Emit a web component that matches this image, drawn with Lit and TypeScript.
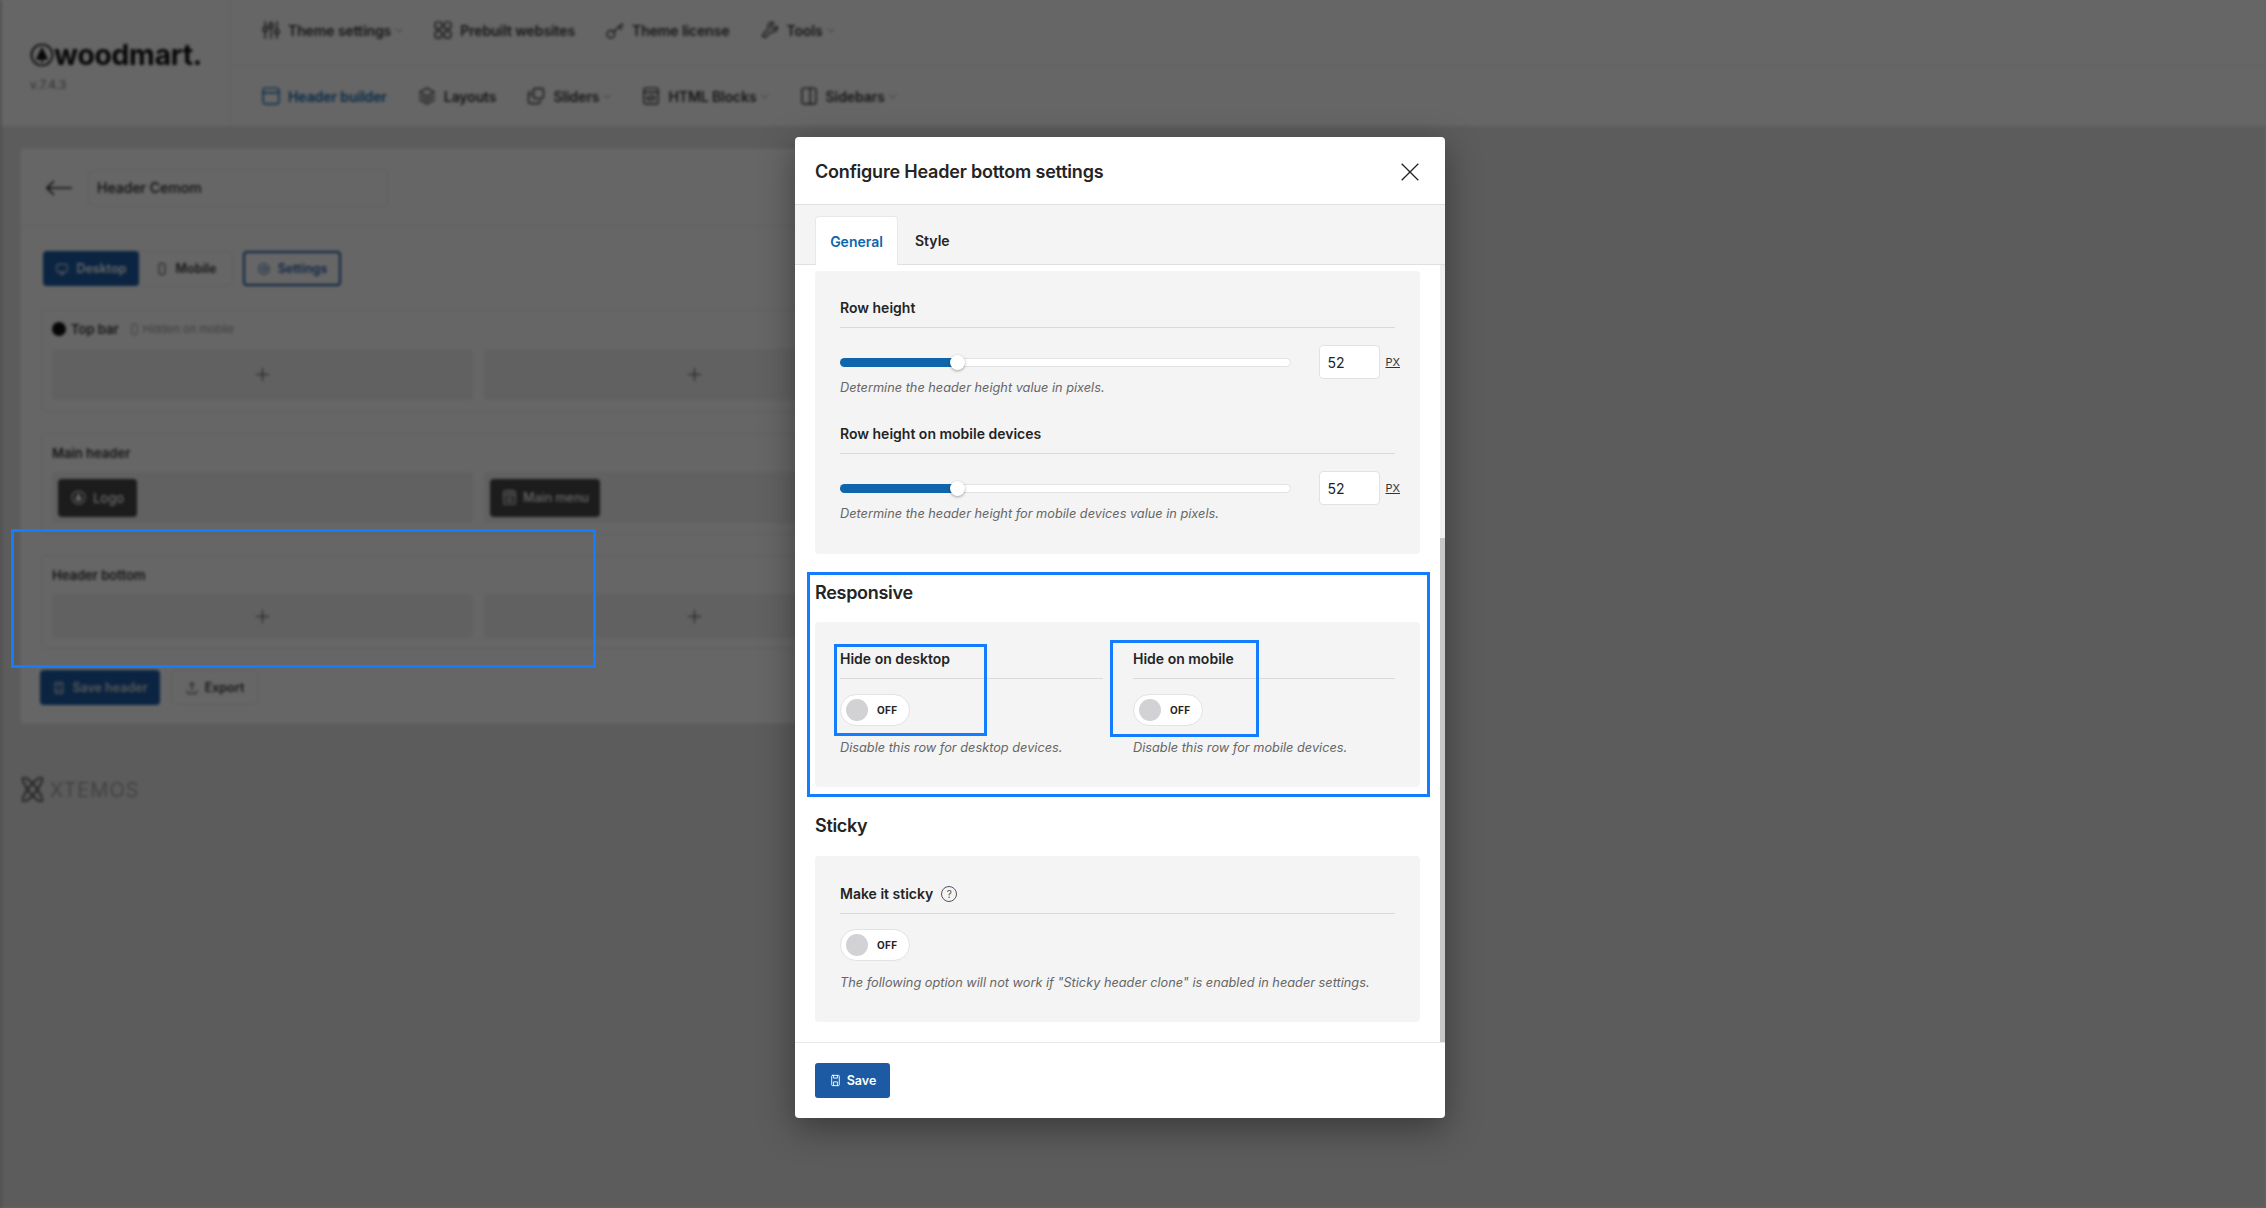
import {LitElement, html, css, svg} from 'lit';
import {customElement} from 'lit/decorators.js';

const icon = (body: unknown, size = 20) => html`<svg
  width=${size}
  height=${size}
  viewBox="0 0 24 24"
  fill="none"
  stroke="currentColor"
  stroke-width="1.7"
  stroke-linecap="round"
  stroke-linejoin="round"
>${body}</svg>`;

const ICONS = {
  sliders: svg`<path d="M5 2v6M5 14v8M12 2v2M12 10v12M19 2v9M19 17v5"/><circle cx="5" cy="11" r="2.6"/><circle cx="12" cy="7" r="2.6"/><circle cx="19" cy="14" r="2.6"/>`,
  grid: svg`<rect x="2.500" y="2.500" width="8" height="8" rx="2.600"/><rect x="13.500" y="2.500" width="8" height="8" rx="2.600"/><rect x="2.500" y="13.500" width="8" height="8" rx="2.600"/><rect x="13.500" y="13.500" width="8" height="8" rx="2.600"/>`,
  key: svg`<circle cx="7" cy="17" r="4.500"/><path d="M10.500 14 20 5M17 8l3 3M20 5l1.500 1.500"/>`,
  wrench: svg`<path d="M15 2.500a5.500 5.500 0 0 0-5 7.600L3.600 17.600a2.200 2.200 0 0 0 3 3l6.300-6.600a5.500 5.500 0 0 0 7.500-6.600l-3.300 3.200-3-.6-.6-3 3.200-3.200a5.500 5.500 0 0 0-1.700-.3Z"/>`,
  window: svg`<rect x="2.500" y="2.500" width="19" height="19" rx="2.500"/><path d="M2.500 8h19"/>`,
  layers: svg`<path d="m12 2.500 9 5-9 5-9-5 9-5Z"/><path d="m3 12 9 5 9-5M3 16.500l9 5 9-5"/>`,
  slides: svg`<rect x="9" y="3" width="12" height="12" rx="2"/><path d="M6 7H5a2 2 0 0 0-2 2v10a2 2 0 0 0 2 2h10a2 2 0 0 0 2-2v-1"/><path d="M6 11v-1"/>`,
  code: svg`<rect x="3.500" y="2.500" width="17" height="19" rx="2"/><path d="M3.500 7.500h17M9.500 12l-2.500 2.500L9.500 17M14.500 12l2.500 2.500-2.500 2.500M12.800 11.500l-1.600 6"/>`,
  sidebar: svg`<rect x="3.500" y="2.500" width="17" height="19" rx="2.500"/><path d="M13.500 2.500v19"/>`,
  monitor: svg`<rect x="3" y="4" width="18" height="13" rx="2"/><path d="M12 17v4M8.500 21h7"/>`,
  phone: svg`<rect x="7" y="2.500" width="10" height="19" rx="2"/>`,
  gear: svg`<path d="m12 2.500 8.200 4.750v9.500L12 21.500l-8.200-4.750v-9.500Z"/><circle cx="12" cy="12" r="3.500"/>`,
  save: svg`<rect x="5" y="2.500" width="14" height="19" rx="1.500"/><path d="M8.500 2.500v5h7v-5M8.500 21.500v-7h7v7"/>`,
  upload: svg`<path d="M12 16V3M7.500 7.500 12 3l4.500 4.500M3.500 17v2.500a2 2 0 0 0 2 2h13a2 2 0 0 0 2-2V17"/>`,
  logoMark: svg`<circle cx="12" cy="12" r="10.500"/><path d="M12 5.500 17 16H7Z" fill="currentColor"/><path d="M12 16v3"/>`,
  menu: svg`<rect x="4" y="2.500" width="16" height="19" rx="1.500"/><path d="M4 8.500h16M10 2.500v6M15 2.500v6"/><circle cx="12" cy="15" r="3"/>`,
};

type NavItem = {label: string; icon: keyof typeof ICONS; caret?: boolean; active?: boolean};

const NAV_TOP: NavItem[] = [
  {label: 'Theme settings', icon: 'sliders', caret: true},
  {label: 'Prebuilt websites', icon: 'grid'},
  {label: 'Theme license', icon: 'key'},
  {label: 'Tools', icon: 'wrench', caret: true},
];

const NAV_BOTTOM: NavItem[] = [
  {label: 'Header builder', icon: 'window', active: true},
  {label: 'Layouts', icon: 'layers'},
  {label: 'Sliders', icon: 'slides', caret: true},
  {label: 'HTML Blocks', icon: 'code', caret: true},
  {label: 'Sidebars', icon: 'sidebar', caret: true},
];

const caret = html`<svg class="caret" width="8" height="5" viewBox="0 0 8 5" fill="none" stroke="currentColor"><path d="m.5.5 3.500 3.500L7.500.5"/></svg>`;

@customElement('builder-page')
export class BuilderPage extends LitElement {
  static styles = css`
    :host {
      display: block;
      height: 1208px;
      box-sizing: border-box;
      background: #e6e6e6;
      border-left: 1px solid #777;
      color: #1e1e1e;
      filter: blur(1.4px);
      font-family: Inter, 'Liberation Sans', sans-serif;
      overflow: hidden;
    }
    .top {
      display: flex;
      height: 126px;
      background: #fff;
    }
    .brand {
      width: 229px;
      flex: none;
      box-sizing: border-box;
      padding: 41px 0 0 29px;
      border-right: 1px solid #f0f0f0;
    }
    .logo {
      display: flex;
      align-items: center;
      height: 28px;
      font-size: 28.200px;
      font-weight: 700;
      letter-spacing: -0.2px;
      color: #111;
    }
    .version {
      margin-top: 8px;
      font-size: 12px;
      color: #777;
    }
    .navs {
      flex: 1;
    }
    .nav {
      display: flex;
      align-items: center;
      padding-left: 31px;
      gap: 30px;
      font-size: 14px;
      letter-spacing: -0.1px;
      font-weight: 600;
      color: #333;
    }
    .nav.first {
      height: 66px;
      box-sizing: border-box;
      padding-bottom: 5px;
      border-bottom: 1px solid #f0f0f0;
    }
    .nav.second {
      height: 60px;
    }
    .nav-item {
      display: flex;
      align-items: center;
      gap: 7px;
    }
    .nav-item.active {
      color: #0f65ab;
    }
    .caret {
      color: #999;
      margin-left: -3px;
    }
    .card {
      margin: 22px 0 0 19px;
      width: 1360px;
      height: 576px;
      box-sizing: border-box;
      background: #fff;
      border: 1px solid #efefef;
      border-radius: 4px;
    }
    .name-row {
      display: flex;
      align-items: center;
      gap: 16px;
      height: 78px;
      box-sizing: border-box;
      padding-left: 25px;
      border-bottom: 1px solid #efefef;
    }
    .name-input {
      width: 300px;
      height: 36px;
      box-sizing: border-box;
      display: flex;
      align-items: center;
      padding-left: 8px;
      border: 1px solid #e8e8e8;
      border-radius: 4px;
      font-size: 14px;
      font-weight: 500;
    }
    .inner {
      padding: 24px 0 0 20px;
    }
    .tabs {
      display: flex;
      gap: 10px;
      margin-left: 2px;
    }
    .segment {
      display: flex;
      height: 35px;
      border: 1px solid #efefef;
      border-radius: 4px;
      width: 190px;
      box-sizing: border-box;
    }
    .seg {
      display: flex;
      align-items: center;
      justify-content: center;
      gap: 7px;
      font-size: 12.500px;
      font-weight: 600;
      color: #333;
    }
    .seg.desktop {
      width: 96px;
      margin: -1px 0 -1px -1px;
      background: #1c5ba3;
      color: #fff;
      border-radius: 4px;
    }
    .seg.mobile {
      flex: 1;
    }
    .seg.settings {
      width: 98px;
      height: 35px;
      box-sizing: border-box;
      border: 2px solid #1c5ba3;
      border-radius: 4px;
      color: #1c5ba3;
    }
    .box {
      box-sizing: border-box;
      margin-top: 21px;
      padding: 9px 10px 10px 10px;
      border: 1px solid #efefef;
      border-radius: 4px;
      width: 1310px;
    }
    .box.first {
      margin-top: 23px;
      height: 103px;
    }
    .box-title {
      display: flex;
      align-items: center;
      gap: 5px;
      height: 20px;
      font-size: 13px;
      font-weight: 600;
      color: #333;
    }
    .dot {
      width: 14px;
      height: 14px;
      border-radius: 50%;
      background: #111;
    }
    .hidden-note {
      display: flex;
      align-items: center;
      gap: 2px;
      margin-left: 4px;
      font-size: 11px;
      font-weight: 400;
      color: #999;
    }
    .cells {
      display: grid;
      grid-template-columns: repeat(3, 421px);
      gap: 11px;
      margin-top: 9px;
    }
    .first .cells {
      margin-top: 10px;
    }
    .cell {
      display: flex;
      align-items: center;
      justify-content: center;
      height: 51px;
      background: #f2f2f2;
      border-radius: 4px;
      color: #444;
    }
    .short .cell {
      height: 44px;
    }
    .cell.left {
      justify-content: flex-start;
      padding-left: 6px;
      box-sizing: border-box;
    }
    .chip {
      display: flex;
      align-items: center;
      gap: 7px;
      height: 38px;
      padding: 0 13px;
      background: #46464a;
      border-radius: 4px;
      color: #fff;
      font-size: 13px;
      font-weight: 500;
    }
    .chip.menu {
      gap: 5px;
      padding: 0 11px;
      font-size: 12.500px;
    }
    .actions {
      display: flex;
      gap: 11px;
      margin: 21px 0 0 -1px;
    }
    .btn {
      display: flex;
      align-items: center;
      justify-content: center;
      gap: 6px;
      height: 35px;
      border-radius: 4px;
      font-size: 12.500px;
      font-weight: 600;
    }
    .btn.save {
      width: 120px;
      background: #1c5ba3;
      color: #ddd;
    }
    .btn.export {
      width: 87px;
      box-sizing: border-box;
      border: 1px solid #efefef;
      color: #333;
    }
    .credits {
      display: flex;
      align-items: center;
      gap: 5px;
      margin: 53px 0 0 19px;
      padding-bottom: 13px;
      border-bottom: 1px solid #e2e2e2;
      width: 1360px;
      color: #8f8f8f;
      font-size: 20px;
      font-weight: 300;
      letter-spacing: 1.1px;
    }
    .credits svg {
      color: #666;
    }
  `;

  private navItem(item: NavItem) {
    return html`<div class="nav-item ${item.active ? 'active' : ''}">
      ${icon(ICONS[item.icon])}<span>${item.label}</span>${item.caret ? caret : ''}
    </div>`;
  }

  private plus() {
    return html`<svg width="13" height="13" viewBox="0 0 13 13" stroke="#444" stroke-width="1"><path d="M6.500 0v13M0 6.500h13"/></svg>`;
  }

  render() {
    return html`
      <div class="top">
        <div class="brand">
          <div class="logo">${icon(ICONS.logoMark, 24)}<span>woodmart.</span></div>
          <div class="version">v.7.4.3</div>
        </div>
        <div class="navs">
          <div class="nav first">${NAV_TOP.map((i) => this.navItem(i))}</div>
          <div class="nav second">${NAV_BOTTOM.map((i) => this.navItem(i))}</div>
        </div>
      </div>
      <div class="card">
        <div class="name-row">
          <svg width="26" height="16" viewBox="0 0 26 16" fill="none" stroke="#222" stroke-width="1.600"><path d="M26 8H1M8 1 1 8l7 7"/></svg>
          <div class="name-input">Header Cemom</div>
        </div>
        <div class="inner">
          <div class="tabs">
            <div class="segment">
              <div class="seg desktop">${icon(ICONS.monitor, 14)}Desktop</div>
              <div class="seg mobile">${icon(ICONS.phone, 14)}Mobile</div>
            </div>
            <div class="seg settings">${icon(ICONS.gear, 14)}Settings</div>
          </div>
          <div class="box first">
            <div class="box-title">
              <span class="dot"></span>Top bar
              <span class="hidden-note">${icon(ICONS.phone, 13)}Hidden on mobile</span>
            </div>
            <div class="cells"><div class="cell">${this.plus()}</div><div class="cell">${this.plus()}</div><div class="cell">${this.plus()}</div></div>
          </div>
          <div class="box">
            <div class="box-title">Main header</div>
            <div class="cells">
              <div class="cell left"><div class="chip">${icon(ICONS.logoMark, 15)}Logo</div></div>
              <div class="cell left"><div class="chip menu">${icon(ICONS.menu, 17)}Main menu</div></div>
              <div class="cell"></div>
            </div>
          </div>
          <div class="box short">
            <div class="box-title">Header bottom</div>
            <div class="cells"><div class="cell">${this.plus()}</div><div class="cell">${this.plus()}</div><div class="cell">${this.plus()}</div></div>
          </div>
          <div class="actions">
            <div class="btn save">${icon(ICONS.save, 14)}Save header</div>
            <div class="btn export">${icon(ICONS.upload, 14)}Export</div>
          </div>
        </div>
      </div>
      <div class="credits">
        <svg width="25" height="25" viewBox="0 0 25 25" fill="none" stroke="currentColor" stroke-width="2.200"><ellipse cx="12.500" cy="12.500" rx="4" ry="15" transform="rotate(38 12.500 12.500)"/><ellipse cx="12.500" cy="12.500" rx="4" ry="15" transform="rotate(-38 12.500 12.500)"/></svg>
        <span>XTEMOS</span>
      </div>
    `;
  }
}

@customElement('settings-modal')
export class SettingsModal extends LitElement {
  static styles = css`
    :host {
      position: absolute;
      left: 795px;
      top: 137px;
      width: 650px;
      height: 981px;
      display: flex;
      flex-direction: column;
      background: #fff;
      border-radius: 4px;
      box-shadow: 0 10px 35px rgba(0, 0, 0, 0.38);
      font-family: Inter, 'Liberation Sans', sans-serif;
      color: #242424;
      overflow: hidden;
    }
    .head {
      display: flex;
      align-items: center;
      justify-content: space-between;
      height: 68px;
      flex: none;
      box-sizing: border-box;
      padding: 2px 26px 0 20px;
      border-bottom: 1px solid #e0e0e0;
      font-size: 18px;
      font-weight: 600;
      letter-spacing: -0.2px;
    }
    .tabs {
      display: flex;
      flex: none;
      height: 60px;
      box-sizing: border-box;
      padding: 11px 0 0 20px;
      background: #f4f4f4;
      border-bottom: 1px solid #e0e0e0;
      font-size: 14px;
      font-weight: 600;
    }
    .tab {
      display: flex;
      align-items: center;
      height: 49px;
      box-sizing: border-box;
    }
    .tab.active {
      width: 83px;
      background: #fff;
      border: 1px solid #e8e8e8;
      border-bottom: none;
      border-radius: 4px 4px 0 0;
      color: #0f65ab;
      justify-content: center;
    }
    .tab:not(.active) {
      padding: 0 17px;
    }
    .body {
      position: relative;
      flex: 1;
      min-height: 0;
      box-sizing: border-box;
      padding: 6px 25px 0 20px;
      overflow: hidden;
    }
    .track-y {
      position: absolute;
      top: 0;
      right: 0;
      bottom: 0;
      width: 5px;
      background: #f0f0f0;
    }
    .thumb-y {
      position: absolute;
      top: 273px;
      left: 0;
      right: 0;
      height: 504px;
      background: #c6c6c6;
    }
    .panel {
      background: #f4f4f4;
      border-radius: 4px;
      padding: 27px 25px 31px 25px;
    }
    .panel.responsive {
      padding-bottom: 30px;
    }
    .panel.sticky {
      padding: 28px 25px 30px 25px;
    }
    h3 {
      margin: 27px 0 17px;
      height: 24px;
      font-size: 18px;
      line-height: 24px;
      font-weight: 600;
      letter-spacing: -0.3px;
    }
    h3.sticky {
      margin-bottom: 18px;
    }
    .label {
      display: flex;
      align-items: center;
      gap: 8px;
      height: 20px;
      padding-bottom: 9px;
      border-bottom: 1px solid #dadada;
      font-size: 14px;
      line-height: 20px;
      font-weight: 600;
    }
    .label.next {
      margin-top: 27px;
    }
    .slider {
      display: flex;
      align-items: center;
      margin-top: 17px;
      width: 560px;
    }
    .rail {
      position: relative;
      width: 451px;
      height: 9px;
      box-sizing: border-box;
      background: #fff;
      border: 1px solid #e2e2e2;
      border-radius: 5px;
    }
    .fill {
      height: 100%;
      margin: -1px 0 0 -1px;
      padding: 1px 0 1px 1px;
      background: #0f65ab;
      border-radius: 5px 0 0 5px;
    }
    .knob {
      position: absolute;
      top: -4px;
      margin-left: -8px;
      width: 15px;
      height: 15px;
      background: #fff;
      border-radius: 50%;
      box-shadow: 0 1px 3px rgba(0, 0, 0, 0.35);
    }
    .num {
      margin-left: 28px;
      width: 62px;
      height: 34px;
      box-sizing: border-box;
      display: flex;
      align-items: center;
      padding-left: 8px;
      background: #fff;
      border: 1px solid #e2e2e2;
      border-radius: 4px;
      font-size: 14px;
    }
    .unit {
      margin-left: 5px;
      font-size: 11px;
      text-decoration: underline;
      color: #333;
    }
    .desc {
      font-size: 12.750px;
      font-style: italic;
      line-height: 18px;
      color: #666;
      white-space: nowrap;
    }
    .desc.after-toggle {
      margin-top: 13px;
    }
    .cols {
      display: grid;
      grid-template-columns: 263px 262px;
      gap: 30px;
    }
    .toggle {
      display: flex;
      align-items: center;
      margin-top: 15px;
      width: 70px;
      height: 32px;
      box-sizing: border-box;
      padding-left: 5px;
      background: #fff;
      border: 1px solid #e2e2e2;
      border-radius: 16px;
      font-size: 10px;
      font-weight: 700;
      letter-spacing: 0.3px;
    }
    .toggle i {
      flex: none;
      width: 22px;
      height: 22px;
      margin-right: 9px;
      background: #d2d2d4;
      border-radius: 50%;
    }
    .help {
      display: inline-flex;
      align-items: center;
      justify-content: center;
      width: 14px;
      height: 14px;
      border: 1px solid #555;
      border-radius: 50%;
      font-size: 10px;
      font-weight: 400;
      color: #555;
    }
    .foot {
      flex: none;
      height: 76px;
      box-sizing: border-box;
      padding: 20px 0 0 20px;
      border-top: 1px solid #e8e8e8;
    }
    .save {
      display: flex;
      align-items: center;
      justify-content: center;
      gap: 5px;
      width: 75px;
      height: 35px;
      background: #1c5ba3;
      border-radius: 3px;
      color: #fff;
      font-size: 12.500px;
      font-weight: 600;
    }
  `;

  private slider(percent: number) {
    return html`<div class="slider">
      <div class="rail">
        <div class="fill" style="width:${percent}%"></div>
        <div class="knob" style="left:${percent}%"></div>
      </div>
      <div class="num">52</div>
      <div class="unit">PX</div>
    </div>`;
  }

  private toggle() {
    return html`<div class="toggle"><i></i>OFF</div>`;
  }

  render() {
    return html`
      <div class="head">
        <span>Configure Header bottom settings</span>
        <svg width="18" height="18" viewBox="0 0 18 18" fill="none" stroke="#222" stroke-width="1.300"><path d="m.7.700 16.600 16.600M17.300.700.700 17.300"/></svg>
      </div>
      <div class="tabs">
        <div class="tab active">General</div>
        <div class="tab">Style</div>
      </div>
      <div class="body">
        <div class="panel">
          <div class="label">Row height</div>
          ${this.slider(26)}
          <div class="desc">Determine the header height value in pixels.</div>
          <div class="label next">Row height on mobile devices</div>
          ${this.slider(26)}
          <div class="desc">Determine the header height for mobile devices value in pixels.</div>
        </div>
        <h3>Responsive</h3>
        <div class="panel responsive cols">
          <div>
            <div class="label">Hide on desktop</div>
            ${this.toggle()}
            <div class="desc after-toggle">Disable this row for desktop devices.</div>
          </div>
          <div>
            <div class="label">Hide on mobile</div>
            ${this.toggle()}
            <div class="desc after-toggle">Disable this row for mobile devices.</div>
          </div>
        </div>
        <h3 class="sticky">Sticky</h3>
        <div class="panel sticky">
          <div class="label">Make it sticky <span class="help">?</span></div>
          ${this.toggle()}
          <div class="desc after-toggle">The following option will not work if "Sticky header clone" is enabled in header settings.</div>
        </div>
        <div class="track-y"><div class="thumb-y"></div></div>
      </div>
      <div class="foot">
        <div class="save">${icon(ICONS.save, 13)}Save</div>
      </div>
    `;
  }
}

// blue review marks drawn over the screenshot: [left, top, width, height]
const MARKS = [
  [11, 529, 585, 139],
  [807, 572, 623, 225],
  [834, 644, 153, 92],
  [1110, 640, 149, 97],
];

@customElement('app-root')
export class AppRoot extends LitElement {
  static styles = css`
    :host {
      display: block;
      position: relative;
      width: 2266px;
      height: 1208px;
      overflow: hidden;
    }
    .scrim {
      position: absolute;
      inset: 0;
      background: rgba(0, 0, 0, 0.6);
    }
    .mark {
      position: absolute;
      box-sizing: border-box;
      border: 3px solid #147dff;
    }
  `;

  render() {
    return html`
      <builder-page></builder-page>
      <div class="scrim"></div>
      <settings-modal></settings-modal>
      ${MARKS.map(
        ([x, y, w, h]) => html`<div class="mark" style="left:${x}px;top:${y}px;width:${w}px;height:${h}px"></div>`
      )}
    `;
  }
}
